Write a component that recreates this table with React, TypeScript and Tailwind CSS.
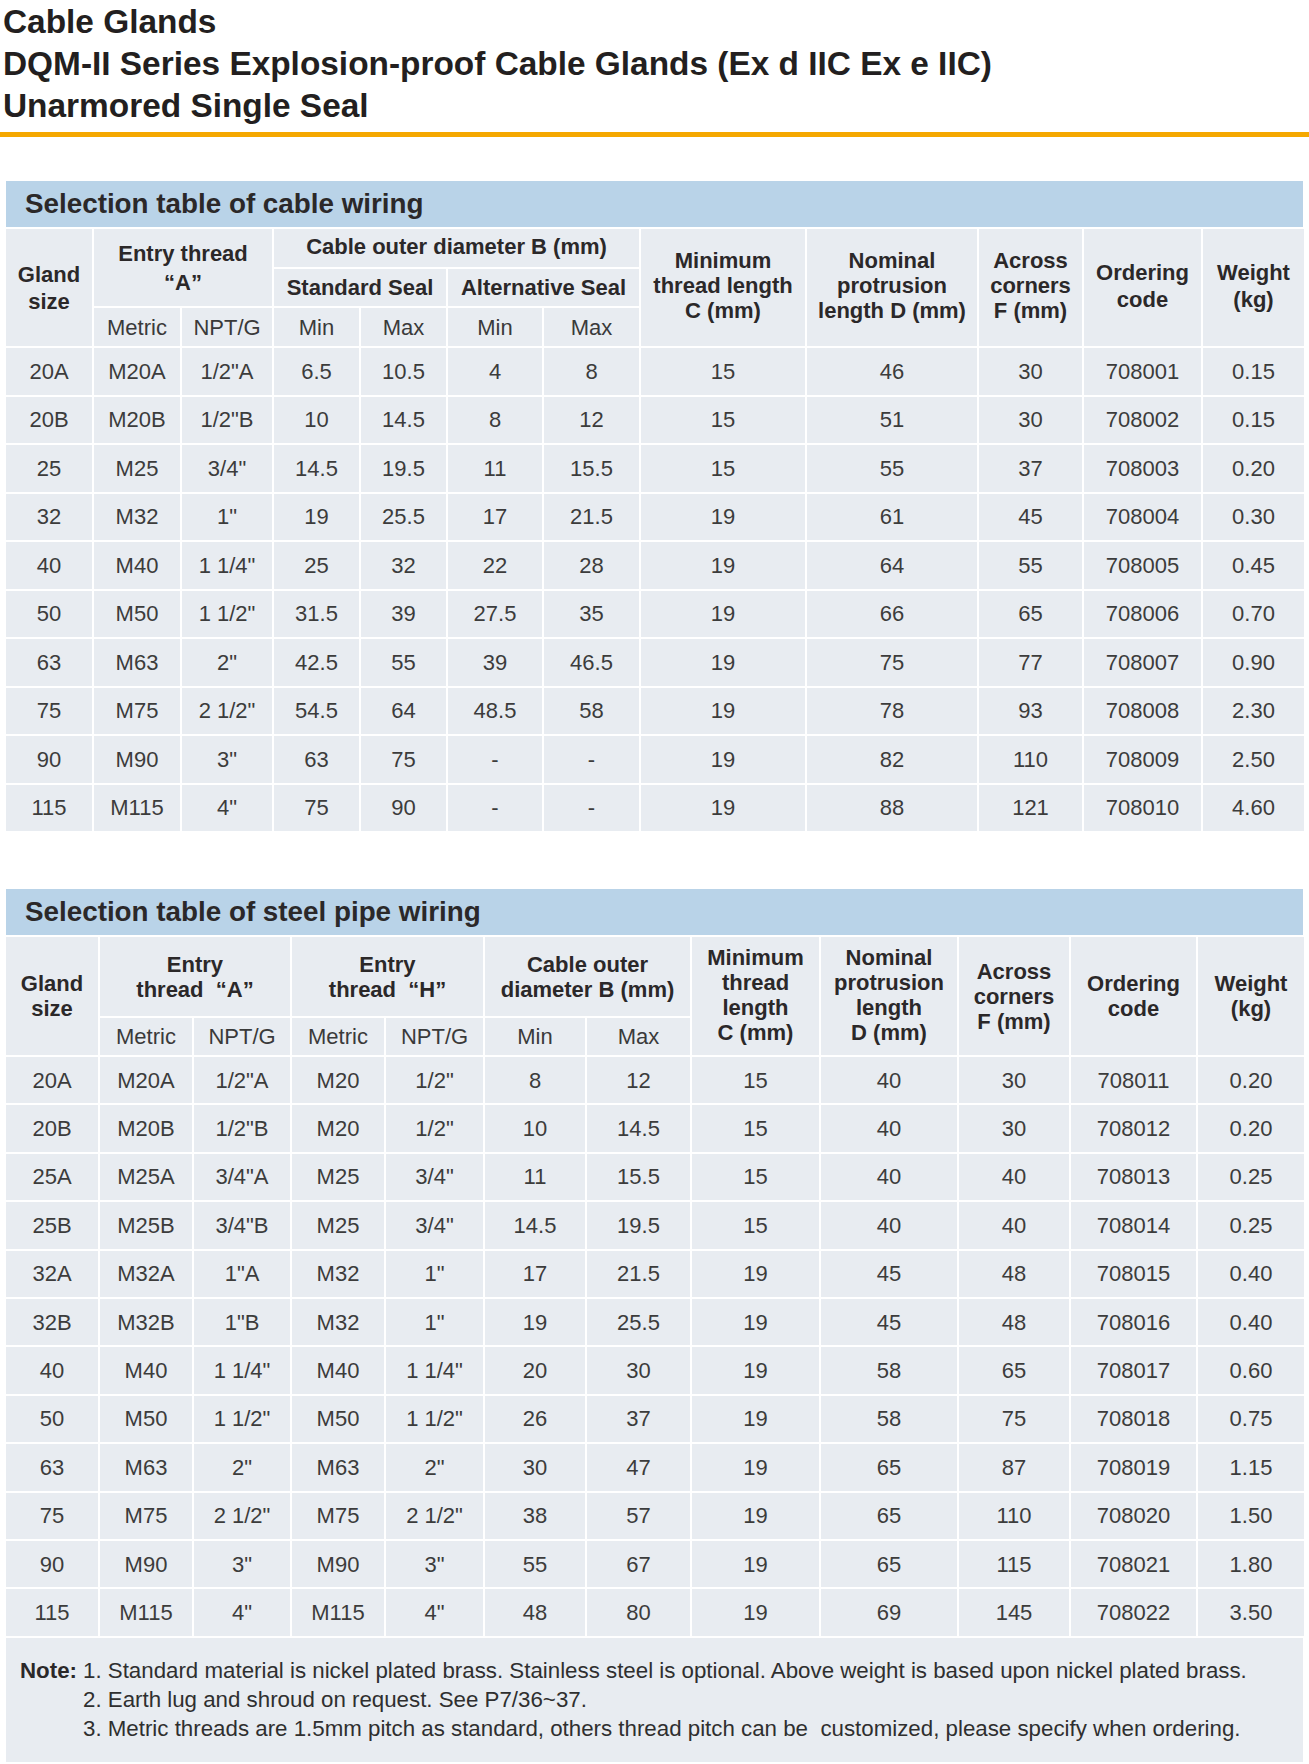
import React from 'react';

const cell = 'bg-[#e8ecf1] flex items-center justify-center text-center';
const head = `${cell} font-bold text-[#2b2829] leading-[25px]`;
const sub = `${cell} text-[#3a3a3a]`;

const cableRows = [
    ['20A', 'M20A', '1/2"A', '6.5', '10.5', '4', '8', '15', '46', '30', '708001', '0.15'],
    ['20B', 'M20B', '1/2"B', '10', '14.5', '8', '12', '15', '51', '30', '708002', '0.15'],
    ['25', 'M25', '3/4"', '14.5', '19.5', '11', '15.5', '15', '55', '37', '708003', '0.20'],
    ['32', 'M32', '1"', '19', '25.5', '17', '21.5', '19', '61', '45', '708004', '0.30'],
    ['40', 'M40', '1 1/4"', '25', '32', '22', '28', '19', '64', '55', '708005', '0.45'],
    ['50', 'M50', '1 1/2"', '31.5', '39', '27.5', '35', '19', '66', '65', '708006', '0.70'],
    ['63', 'M63', '2"', '42.5', '55', '39', '46.5', '19', '75', '77', '708007', '0.90'],
    ['75', 'M75', '2 1/2"', '54.5', '64', '48.5', '58', '19', '78', '93', '708008', '2.30'],
    ['90', 'M90', '3"', '63', '75', '-', '-', '19', '82', '110', '708009', '2.50'],
    ['115', 'M115', '4"', '75', '90', '-', '-', '19', '88', '121', '708010', '4.60'],
];

const pipeRows = [
    ['20A', 'M20A', '1/2"A', 'M20', '1/2"', '8', '12', '15', '40', '30', '708011', '0.20'],
    ['20B', 'M20B', '1/2"B', 'M20', '1/2"', '10', '14.5', '15', '40', '30', '708012', '0.20'],
    ['25A', 'M25A', '3/4"A', 'M25', '3/4"', '11', '15.5', '15', '40', '40', '708013', '0.25'],
    ['25B', 'M25B', '3/4"B', 'M25', '3/4"', '14.5', '19.5', '15', '40', '40', '708014', '0.25'],
    ['32A', 'M32A', '1"A', 'M32', '1"', '17', '21.5', '19', '45', '48', '708015', '0.40'],
    ['32B', 'M32B', '1"B', 'M32', '1"', '19', '25.5', '19', '45', '48', '708016', '0.40'],
    ['40', 'M40', '1 1/4"', 'M40', '1 1/4"', '20', '30', '19', '58', '65', '708017', '0.60'],
    ['50', 'M50', '1 1/2"', 'M50', '1 1/2"', '26', '37', '19', '58', '75', '708018', '0.75'],
    ['63', 'M63', '2"', 'M63', '2"', '30', '47', '19', '65', '87', '708019', '1.15'],
    ['75', 'M75', '2 1/2"', 'M75', '2 1/2"', '38', '57', '19', '65', '110', '708020', '1.50'],
    ['90', 'M90', '3"', 'M90', '3"', '55', '67', '19', '65', '115', '708021', '1.80'],
    ['115', 'M115', '4"', 'M115', '4"', '48', '80', '19', '69', '145', '708022', '3.50'],
];

const Band = ({ title }: { title: string }) => (
    <div className="h-[46px] bg-[#b9d3e8] flex items-center pl-[19px] mb-[2px]">
        <span className="text-[27.8px] font-bold text-[#2b2829]">{title}</span>
    </div>
);

const DataRows = ({ rows }: { rows: string[][] }) => (
    <>
        {rows.map((r, i) =>
            r.map((v, j) => (
                <div key={`${i}-${j}`} className={`${cell} text-[#3c3c3c]`}>
                    {v}
                </div>
            ))
        )}
    </>
);

const CableTable = () => (
    <div>
        <Band title="Selection table of cable wiring" />
        <div className="grid gap-[2px] grid-cols-[86px_86px_90px_85px_85px_94px_95px_164px_170px_103px_117px_101px] grid-rows-[38px_37px_38px_repeat(10,46.5px)]">
            <div className={`${head} leading-[27px] col-start-1 row-start-1 row-span-3`}>Gland<br />size</div>
            <div className={`${head} leading-[29px] col-start-2 col-span-2 row-start-1 row-span-2`}>Entry thread<br />“A”</div>
            <div className={`${head} col-start-4 col-span-4 row-start-1 pb-[3px]`}>Cable outer diameter B (mm)</div>
            <div className={`${head} col-start-4 col-span-2 row-start-2`}>Standard Seal</div>
            <div className={`${head} col-start-6 col-span-2 row-start-2`}>Alternative Seal</div>
            <div className={`${sub} col-start-2 row-start-3`}>Metric</div>
            <div className={`${sub} col-start-3 row-start-3`}>NPT/G</div>
            <div className={`${sub} col-start-4 row-start-3`}>Min</div>
            <div className={`${sub} col-start-5 row-start-3`}>Max</div>
            <div className={`${sub} col-start-6 row-start-3`}>Min</div>
            <div className={`${sub} col-start-7 row-start-3`}>Max</div>
            <div className={`${head} pb-[5px] col-start-8 row-start-1 row-span-3`}>Minimum<br />thread length<br />C (mm)</div>
            <div className={`${head} pb-[5px] col-start-9 row-start-1 row-span-3`}>Nominal<br />protrusion<br />length D (mm)</div>
            <div className={`${head} pb-[5px] col-start-10 row-start-1 row-span-3`}>Across<br />corners<br />F (mm)</div>
            <div className={`${head} leading-[27px] pb-[3px] col-start-11 row-start-1 row-span-3`}>Ordering<br />code</div>
            <div className={`${head} leading-[27px] pb-[3px] col-start-12 row-start-1 row-span-3`}>Weight<br />(kg)</div>
            <DataRows rows={cableRows} />
        </div>
    </div>
);

const PipeTable = () => (
    <div>
        <Band title="Selection table of steel pipe wiring" />
        <div className="grid gap-[2px] grid-cols-[92px_92px_96px_92px_97px_100px_103px_127px_136px_110px_125px_106px] grid-rows-[79px_37px_repeat(12,46.4px)]">
            <div className={`${head} col-start-1 row-start-1 row-span-2`}>Gland<br />size</div>
            <div className={`${head} col-start-2 col-span-2 row-start-1`}>Entry<br />thread&nbsp;&nbsp;“A”</div>
            <div className={`${head} col-start-4 col-span-2 row-start-1`}>Entry<br />thread&nbsp;&nbsp;“H”</div>
            <div className={`${head} col-start-6 col-span-2 row-start-1`}>Cable outer<br />diameter B (mm)</div>
            <div className={`${sub} col-start-2 row-start-2`}>Metric</div>
            <div className={`${sub} col-start-3 row-start-2`}>NPT/G</div>
            <div className={`${sub} col-start-4 row-start-2`}>Metric</div>
            <div className={`${sub} col-start-5 row-start-2`}>NPT/G</div>
            <div className={`${sub} col-start-6 row-start-2`}>Min</div>
            <div className={`${sub} col-start-7 row-start-2`}>Max</div>
            <div className={`${head} pb-[3px] col-start-8 row-start-1 row-span-2`}>Minimum<br />thread<br />length<br />C (mm)</div>
            <div className={`${head} pb-[3px] col-start-9 row-start-1 row-span-2`}>Nominal<br />protrusion<br />length<br />D (mm)</div>
            <div className={`${head} col-start-10 row-start-1 row-span-2`}>Across<br />corners<br />F (mm)</div>
            <div className={`${head} col-start-11 row-start-1 row-span-2`}>Ordering<br />code</div>
            <div className={`${head} col-start-12 row-start-1 row-span-2`}>Weight<br />(kg)</div>
            <DataRows rows={pipeRows} />
        </div>
        <div className="mt-[2px] h-[124px] bg-[#e8ecf1] pt-[18px] pl-[14px] flex text-[22.3px] text-[#2f2f2f] leading-[29px]">
            <span className="font-bold text-[#2b2829]">Note:</span>
            <div className="ml-[6px]">
                <div>1. Standard material is nickel plated brass. Stainless steel is optional. Above weight is based upon nickel plated brass.</div>
                <div>2. Earth lug and shroud on request. See P7/36~37.</div>
                <div>3. Metric threads are 1.5mm pitch as standard, others thread pitch can be &nbsp;customized, please specify when ordering.</div>
            </div>
        </div>
    </div>
);

const App = () => {
    return (
        <div className="w-[1309px] min-h-[1764px] bg-white font-['Liberation_Sans',Arial,sans-serif] text-[22px]">
            <header className="pl-[3px] pt-[1px] text-[33.4px] leading-[42px] font-bold text-[#231f20]">
                <div>Cable Glands</div>
                <div>DQM-II Series Explosion-proof Cable Glands (Ex d IIC Ex e IIC)</div>
                <div>Unarmored Single Seal</div>
            </header>
            <div className="mt-[5px] h-[5px] bg-[#f5a800]" />

            <main className="px-[6px] pt-[44px]">
                <CableTable />
                <div className="h-[58px]" />
                <PipeTable />
            </main>
        </div>
    );
};

export default App;
